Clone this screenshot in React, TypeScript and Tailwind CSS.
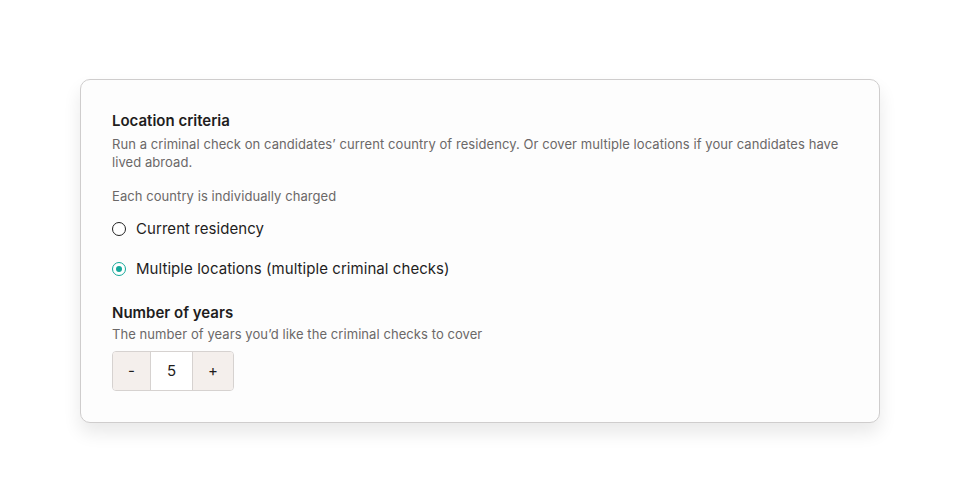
import React, { useState } from "react";

export default function App() {
  const [choice, setChoice] = useState("multiple");
  const [years, setYears] = useState(5);
  return (
    <div
      className="min-h-[502px] w-[960px] bg-white pt-[79px] pl-[80px]"
      style={{ fontFamily: "Inter, 'Noto Sans', sans-serif" }}
    >
      <div className="w-[800px] rounded-[10px] border border-[#cfcdcd] bg-[#fdfdfd] px-[31px] pt-[31px] pb-[31px] shadow-[0_10px_18px_rgba(0,0,0,0.09)]">
        <div className="text-[15px] leading-[20px] font-semibold text-[#1f1d1d]">Location criteria</div>
        <p className="mt-[4px] text-[13px] leading-[18px] tracking-[0.07px] text-[#6b6868]">
          Run a criminal check on candidates’ current country of residency. Or cover multiple locations if your candidates have lived abroad.
        </p>
        <p className="mt-[16px] text-[13px] leading-[18px] tracking-[0.07px] text-[#6b6868]">Each country is individually charged</p>
        <div className="mt-[13px] flex flex-col gap-[18px]">
          {[
            { id: "current", label: "Current residency" },
            { id: "multiple", label: "Multiple locations (multiple criminal checks)" },
          ].map((o) => (
            <label key={o.id} className="flex h-[22px] cursor-pointer items-center gap-[10px]" onClick={() => setChoice(o.id)}>
              {choice === o.id ? (
                <span className="flex h-[14px] w-[14px] items-center justify-center rounded-full border-[1.5px] border-[#14a89a] bg-white">
                  <span className="h-[6px] w-[6px] rounded-full bg-[#14a89a]" />
                </span>
              ) : (
                <span className="h-[14px] w-[14px] rounded-full border-[1.5px] border-[#222] bg-white" />
              )}
              <span className="text-[15px] leading-[22px] tracking-[0.06px] text-[#1f1d1d]">{o.label}</span>
            </label>
          ))}
        </div>
        <div className="mt-[23px] text-[15px] leading-[20px] font-semibold text-[#1f1d1d]">Number of years</div>
        <p className="mt-[2px] text-[13px] leading-[18px] tracking-[0.07px] text-[#6b6868]">The number of years you’d like the criminal checks to cover</p>
        <div className="mt-[8px] flex h-[40px] w-[122px] overflow-hidden rounded-[4px] border border-[#d6d2d0] text-[15px] text-[#1f1d1d]">
          <button className="w-[37px] bg-[#f4efec]" onClick={() => setYears(Math.max(0, years - 1))}>-</button>
          <div className="flex w-[43px] items-center justify-center border-x border-[#d6d2d0] bg-white">{years}</div>
          <button className="flex-1 bg-[#f4efec]" onClick={() => setYears(years + 1)}>+</button>
        </div>
      </div>
    </div>
  );
}
